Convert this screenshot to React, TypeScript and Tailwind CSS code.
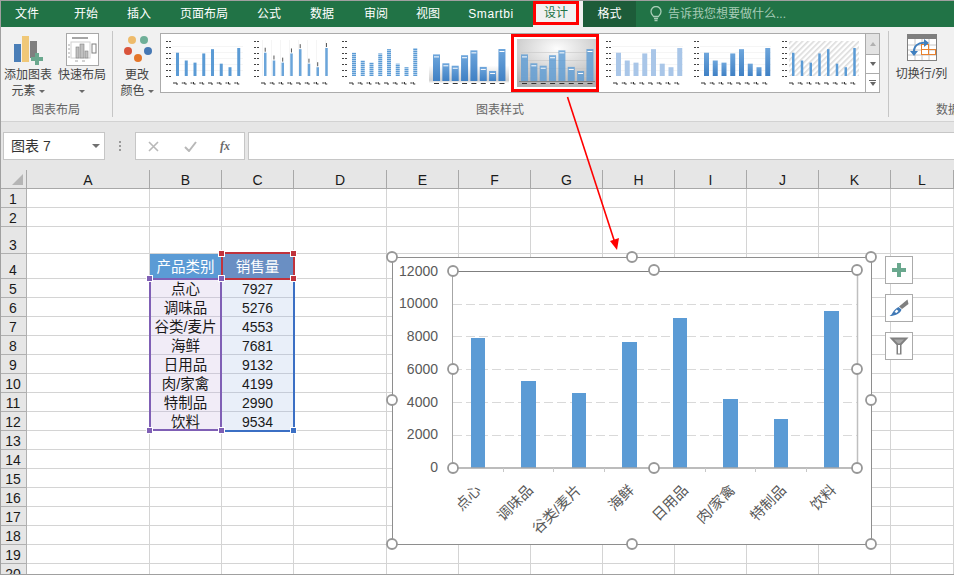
const font = "font-['Liberation_Sans','Noto_Sans_CJK_SC',sans-serif]";

const tabs = [
  { label: "文件", w: "w-[54px]" },
  { label: "开始", w: "w-[64px]" },
  { label: "插入", w: "w-[42px]" },
  { label: "页面布局", w: "w-[88px]" },
  { label: "公式", w: "w-[42px]" },
  { label: "数据", w: "w-[64px]" },
  { label: "审阅", w: "w-[44px]" },
  { label: "视图", w: "w-[60px]" },
  { label: "Smartbi", w: "w-[66px] tracking-[0.6px]" },
];

const sales = [7927, 5276, 4553, 7681, 9132, 4199, 2990, 9534];
const products = ["点心", "调味品", "谷类/麦片", "海鲜", "日用品", "肉/家禽", "特制品", "饮料"];
const columns = ["A", "B", "C", "D", "E", "F", "G", "H", "I", "J", "K", "L"];
const rowNumbers = Array.from({ length: 20 }, (_, i) => i + 1);

// ---- ribbon icons ----

function AddElementIcon() {
  return (
    <svg width="30" height="31" viewBox="0 0 30 31" className="block">
      <rect x="1" y="9" width="7" height="18" fill="#4a7eb7" />
      <rect x="9" y="1" width="7" height="26" fill="#f0c878" />
      <rect x="17" y="6" width="7" height="17" fill="#7f7f7f" />
      <rect x="18" y="22" width="12" height="4" fill="#6aa88e" />
      <rect x="22" y="18" width="4" height="12" fill="#6aa88e" />
    </svg>
  );
}

function QuickLayoutIcon() {
  return (
    <svg width="33" height="33" viewBox="0 0 33 33" className="block">
      <rect x="0.5" y="0.5" width="32" height="32" fill="#fff" stroke="#a8a8a8" />
      <rect x="6" y="4" width="16" height="2" fill="#a6a6a6" />
      <rect x="5" y="9" width="19" height="16" fill="none" stroke="#d0d0d0" />
      <rect x="10" y="14" width="3" height="11" fill="#c0c0c0" stroke="#808080" strokeWidth="0.6" />
      <rect x="14" y="11" width="4" height="14" fill="#c0c0c0" stroke="#808080" strokeWidth="0.6" />
      <rect x="19" y="18" width="3" height="7" fill="#c0c0c0" stroke="#808080" strokeWidth="0.6" />
      <rect x="26" y="11" width="4" height="9" fill="none" stroke="#808080" />
      <path d="M2 12h2M2 16h2M2 20h2M2 24h2M9 28h3M16 28h3" stroke="#a6a6a6" />
    </svg>
  );
}

function ColorsIcon() {
  return (
    <svg width="30" height="28" viewBox="0 0 30 28" className="block">
      <circle cx="10" cy="5" r="4" fill="#eebb6b" />
      <circle cx="22" cy="5" r="4" fill="#6faf98" />
      <circle cx="6" cy="16" r="4" fill="#d9543c" />
      <circle cx="26" cy="16" r="4" fill="#4678b4" />
      <circle cx="16" cy="23" r="4" fill="#e4762a" />
    </svg>
  );
}

function SwitchIcon() {
  return (
    <svg width="30" height="27" viewBox="0 0 30 27" className="block">
      <rect x="0.5" y="0.5" width="29" height="26" fill="#fff" stroke="#808080" />
      <rect x="0" y="0" width="30" height="5" fill="#7f7f7f" />
      <path d="M1 11h28M1 16h28M1 21h28M8 5v21M15 5v21M22 5v21" stroke="#c8c8c8" />
      <rect x="14.5" y="10.5" width="7" height="10" fill="#fff" stroke="#e9812e" />
      <rect x="14.5" y="15.5" width="14" height="5" fill="none" stroke="#e9812e" />
      <path d="M7 20C6 12 11 8 19 9" fill="none" stroke="#3f7fbf" strokeWidth="2" />
      <path d="M17 5l5 4-5 4zM3 17l8 0-4 5z" fill="#3f7fbf" />
    </svg>
  );
}

function Caret({ className = "" }: { className?: string }) {
  return <span className={`inline-block border-x-[3px] border-t-[3px] border-x-transparent border-t-[#6a6a6a] ${className}`} />;
}

// ---- gallery thumbnails ----

type Thumb = {
  wide?: boolean;
  barW?: number;
  fill: string;
  opacity?: number;
  back?: "fade" | "gray" | "hatch";
  stripes?: boolean;
  whisker?: boolean;
  marks?: boolean;
  grid?: boolean;
  vgrid?: boolean;
};

const thumbs: Thumb[] = [
  { barW: 3, fill: "#5b9bd5", grid: true },
  { barW: 2.5, fill: "#6ba5da", whisker: true, vgrid: true },
  { barW: 4, fill: "#5b9bd5", stripes: true },
  { wide: true, fill: "url(#barDeep)", back: "fade", marks: true },
  { wide: true, fill: "#5b9bd5", opacity: 0.8, back: "gray", marks: true },
  { barW: 5, fill: "#a9c6e8", grid: true },
  { barW: 5, fill: "url(#barDeep)", grid: true },
  { barW: 2.5, fill: "#5b9bd5", back: "hatch" },
];

function MiniChart({ t, id }: { t: Thumb; id: number }) {
  const bottom = t.wide ? 42 : 37;
  const scale = (t.wide ? 32 : 28) / 9534;
  return (
    <svg width="80" height="48" viewBox="0 0 80 48" className="block">
      <defs>
        <linearGradient id="barDeep" x1="0" y1="0" x2="0" y2="1">
          <stop offset="0" stopColor="#6ea6dc" />
          <stop offset="1" stopColor="#3f80c4" />
        </linearGradient>
        <linearGradient id={`fade${id}`} x1="0" y1="0" x2="0" y2="1">
          <stop offset="0" stopColor="#fff" />
          <stop offset="0.55" stopColor="#fff" />
          <stop offset="0.86" stopColor="#cfcfcf" />
          <stop offset="0.92" stopColor="#fff" />
        </linearGradient>
        <radialGradient id={`gray${id}`} cx="0.5" cy="0.2" r="0.85">
          <stop offset="0" stopColor="#fdfdfd" />
          <stop offset="1" stopColor="#b0b0b0" />
        </radialGradient>
        <pattern id={`hatch${id}`} width="4" height="4" patternUnits="userSpaceOnUse" patternTransform="rotate(45)">
          <rect width="4" height="4" fill="#fff" />
          <rect width="1.6" height="4" fill="#dcdcdc" />
        </pattern>
        <pattern id={`stripe${id}`} width="4" height="2" patternUnits="userSpaceOnUse">
          <rect width="4" height="2" fill="#c4dcf2" />
          <rect width="4" height="1.2" fill="#5b9bd5" />
        </pattern>
      </defs>
      {t.back === "fade" && <rect width="80" height="48" fill={`url(#fade${id})`} />}
      {t.back === "gray" && <rect width="80" height="48" fill={`url(#gray${id})`} />}
      {t.back === "hatch" && <rect x="8" y="2" width="70" height="35" fill={`url(#hatch${id})`} />}
      {t.grid && [7, 13, 19, 25, 31].map((y) => <rect key={y} x="7" y={y} width="71" height="0.6" fill="#efefef" />)}
      {t.vgrid && [9, 18, 27, 36, 45, 54, 63, 72].map((x) => <rect key={x} x={x} y="1" width="0.6" height="36" fill="#efefef" />)}
      {t.back === "gray" && [13, 21, 29, 37].map((y) => <rect key={y} x="4" y={y} width="72" height="0.6" fill="#c6c6c6" />)}
      {!t.wide && [2, 8, 14, 19, 25, 31, 37].map((y) => (
        <path key={y} d={`M1 ${y + 0.5}h2M4 ${y + 0.5}h2`} stroke="#444" />
      ))}
      {sales.map((v, i) => {
        const h = v * scale;
        const x = t.wide ? 4 + i * 9.35 : 11 + i * 8.75;
        const w = t.wide ? 7 : t.barW ?? 3;
        return (
          <g key={i}>
            <rect
              x={x}
              y={bottom - h}
              width={w}
              height={h}
              fill={t.stripes ? `url(#stripe${id})` : t.fill}
              opacity={t.opacity ?? 1}
            />
            {t.whisker && <rect x={x + 0.7} y={bottom - h - 5} width="1" height="4" fill="#555" />}
            {t.marks && <rect x={x + 1} y={bottom - h + 2} width="5" height="1" fill="#fff" />}
            {t.wide ? (
              <rect x={x + 1} y="44" width="5" height="1" fill="#333" />
            ) : (
              <path d={`M${x - 3} 44h2M${x} 43v2h2`} stroke="#333" fill="none" />
            )}
          </g>
        );
      })}
      {t.back === "gray" && <rect x="2" y="42" width="76" height="1" fill="#808080" />}
    </svg>
  );
}

// ---- embedded chart ----

function Handle({ x, y }: { x: number; y: number }) {
  return <circle cx={x} cy={y} r="5" fill="#fff" stroke="#979797" strokeWidth="1.8" />;
}

const barBoxes = [
  [471, 14], [521, 15], [572, 14], [622, 15], [673, 14], [723, 15], [774, 14], [824, 15],
];
const labelEnds = [482, 534, 582, 635, 689, 736, 787, 837];
const axisLabels = [
  ["12000", 271], ["10000", 303], ["8000", 336], ["6000", 369], ["4000", 402], ["2000", 434], ["0", 467],
] as const;

function Chart() {
  return (
    <svg width="954" height="575" viewBox="0 0 954 575" className={`absolute left-0 top-0 ${font}`}>
      <rect x="392.5" y="257.5" width="479" height="287" fill="#fff" stroke="#8e8e8e" />
      {[304, 336, 369, 402, 435].map((y) => (
        <line key={y} x1="453" x2="857" y1={y + 0.5} y2={y + 0.5} stroke="#d9d9d9" strokeDasharray="9 4" />
      ))}
      {sales.map((v, i) => {
        const top = 468 - Math.round((v / 12000) * 197);
        return <rect key={i} x={barBoxes[i][0]} y={top} width={barBoxes[i][1]} height={468 - top} fill="#5b9bd5" />;
      })}
      <line x1="453" x2="857" y1="271.5" y2="271.5" stroke="#7f7f7f" />
      <line x1="857.5" x2="857.5" y1="271" y2="468" stroke="#bfbfbf" strokeWidth="1.5" />
      <line x1="452.5" x2="452.5" y1="271" y2="468" stroke="#a6a6a6" />
      <line x1="453" x2="857" y1="468" y2="468" stroke="#a6a6a6" strokeWidth="1.5" />
      {[503, 553, 604, 705, 755, 806].map((x) => (
        <line key={x} x1={x + 0.5} x2={x + 0.5} y1="468" y2="472" stroke="#c8c8c8" />
      ))}
      {axisLabels.map(([t, y]) => (
        <text key={t} x="438" y={y + 5} textAnchor="end" fontSize="14" fill="#595959">{t}</text>
      ))}
      {products.map((p, i) => (
        <text
          key={p}
          x={labelEnds[i]}
          y={491}
          textAnchor="end"
          fontSize="14.5"
          fill="#595959"
          transform={`rotate(-45 ${labelEnds[i]} 491)`}
        >
          {p}
        </text>
      ))}
      {[[392, 257], [632, 257], [871, 257], [392, 400], [871, 400], [392, 544], [632, 544], [871, 544],
        [453, 271], [654, 270], [857, 270], [453, 369], [857, 369], [453, 468], [654, 468], [857, 468]].map(([x, y]) => (
        <Handle key={`${x}-${y}`} x={x} y={y} />
      ))}
    </svg>
  );
}

function ChartButtons() {
  return (
    <div className="absolute left-[885px] top-[256px] flex flex-col gap-[10px]">
      <div className="w-[28px] h-[28px] bg-white border border-[#ababab] flex items-center justify-center">
        <svg width="14" height="14" viewBox="0 0 14 14"><path d="M5 0h4v5h5v4H9v5H5V9H0V5h5z" fill="#6aa88e" /></svg>
      </div>
      <div className="w-[28px] h-[28px] bg-white border border-[#ababab] flex items-center justify-center">
        <svg width="20" height="18" viewBox="0 0 20 18">
          <path d="M18.5 0.5 19.5 5 13 10 10 7.5z" fill="#7f7f7f" />
          <path d="M9.5 8 12.5 10.5C11.5 14.5 6 17 0.5 17 4 15.5 3.5 11 9.5 8z" fill="#3f78b5" />
          <path d="M7.5 10.5 9.5 12 7.5 14 5.5 13z" fill="#fff" />
        </svg>
      </div>
      <div className="w-[28px] h-[28px] bg-white border border-[#ababab] flex items-center justify-center">
        <svg width="20" height="18" viewBox="0 0 20 18">
          <path d="M0.5 0.5h19L12.5 8v9.5h-5V8z" fill="#808080" />
          <path d="M5 2.5h10L11 6.5H9z" fill="#a8a8a8" />
          <rect x="9" y="8" width="2" height="8.5" fill="#fff" />
        </svg>
      </div>
    </div>
  );
}

// ---- table selection handles ----

function Square({ x, y, c }: { x: number; y: number; c: string }) {
  return <div className={`absolute w-[7px] h-[7px] border border-white ${c}`} style={{ left: x - 3, top: y - 3 }} />;
}

function TableSelection() {
  return (
    <>
      <div className="absolute left-[149px] top-[278px] w-[73px] h-[153px] border-2 border-[#7f5fb5]" />
      <div className="absolute left-[222px] top-[278px] w-[73px] h-[154px] border-2 border-l-0 border-[#3b6fc4]" />
      <div className="absolute left-[221px] top-[252px] w-[74px] h-[28px] border-2 border-[#c0333c]" />
      <Square x={149} y={278} c="bg-[#7f5fb5]" />
      <Square x={221} y={278} c="bg-[#7f5fb5]" />
      <Square x={149} y={430} c="bg-[#7f5fb5]" />
      <Square x={221} y={430} c="bg-[#7f5fb5]" />
      <Square x={293} y={430} c="bg-[#3b6fc4]" />
      <Square x={221} y={253} c="bg-[#c0333c]" />
      <Square x={293} y={253} c="bg-[#c0333c]" />
      <Square x={293} y={278} c="bg-[#c0333c]" />
    </>
  );
}

// ---- sheet ----

function Sheet() {
  return (
    <div className="grid grid-cols-[27px_123px_72px_72px_93px_72px_72px_72px_72px_72px_72px_72px_63px] grid-rows-[19px_19px_19px_27px_25px_repeat(16,19px)] text-[14px] text-[#1a1a1a]">
      <div className="relative bg-[#e6e6e6] border-r border-b border-[#a8a8a8]">
        <svg width="12" height="12" viewBox="0 0 12 12" className="absolute left-[12px] top-[4px]"><path d="M11 0v11H0z" fill="#b5b5b5" /></svg>
      </div>
      {columns.map((c) => (
        <div key={c} className="bg-[#e6e6e6] border-r border-b border-[#a8a8a8] flex items-center justify-center leading-none pt-[2px]">
          {c}
        </div>
      ))}
      {rowNumbers.flatMap((r) => {
        const cells = [
          <div key={`n${r}`} className="bg-[#e6e6e6] border-r border-b border-[#b0b0b0] flex items-end justify-center leading-[16px]">
            {r}
          </div>,
        ];
        columns.forEach((c) => {
          let cls = "bg-white border-[#d4d4d4]";
          let text = "";
          if (r === 4 && c === "B") {
            cls = "bg-[#5b9bd5] border-[#5b9bd5] text-white text-[14.5px]";
            text = "产品类别";
          } else if (r === 4 && c === "C") {
            cls = "bg-[#6a8fc3] border-[#6a8fc3] text-white text-[14.5px]";
            text = "销售量";
          } else if (r >= 5 && r <= 12 && c === "B") {
            cls = "bg-[#f1ecf7] border-[#cfcbd8] text-[14.5px]";
            text = products[r - 5];
          } else if (r >= 5 && r <= 12 && c === "C") {
            cls = "bg-[#e9eff9] border-[#c6ccd8]";
            text = String(sales[r - 5]);
          }
          cells.push(
            <div key={`${c}${r}`} className={`border-r border-b flex items-center justify-center leading-none whitespace-nowrap pt-[2px] ${cls}`}>
              {text}
            </div>,
          );
        });
        return cells;
      })}
    </div>
  );
}

export default function App() {
  return (
    <div className={`relative w-[954px] h-[575px] overflow-hidden bg-white ${font}`}>
      {/* tabs */}
      <div className="h-[27px] bg-[#217346] flex items-start text-[12px] text-white">
        {tabs.map((t) => (
          <div key={t.label} className={`${t.w} h-[27px] flex items-center justify-center shrink-0`}>
            {t.label}
          </div>
        ))}
        <div className="w-[9px] shrink-0" />
        <div className="w-[46px] h-[27px] shrink-0 bg-[#f1f1f1] text-[#217346] flex items-start justify-center">
          <div className="w-[46px] h-[24px] mt-[1px] border-[3px] border-[#ff0000] flex items-center justify-center">设计</div>
        </div>
        <div className="w-[4px] shrink-0 h-[27px] bg-[#f1f1f1]" />
        <div className="w-[53px] h-[27px] shrink-0 bg-[#1d5c39] flex items-center justify-center">格式</div>
        <div className="ml-[14px] h-[27px] flex items-center gap-[6px] text-[#a7ccb6]">
          <svg width="12" height="16" viewBox="0 0 12 16" fill="none" stroke="#a7ccb6" strokeWidth="1.3">
            <path d="M3.5 10.5C2.5 9 1 8 1 5.5a5 5 0 0 1 10 0C11 8 9.5 9 8.5 10.5z" />
            <path d="M4 12.5h4M4.5 14.5h3" />
          </svg>
          <span>告诉我您想要做什么...</span>
        </div>
      </div>

      {/* ribbon */}
      <div className="h-[95px] bg-[#f1f1f1] border-b border-[#d2d2d2] flex text-[12px] leading-[15px] text-[#444]">
        <div className="w-[113px] shrink-0 flex flex-col border-r border-[#c6c6c6] my-[4px]">
          <div className="flex-1 flex pl-[3px]">
            <div className="w-[50px] flex flex-col items-center">
              <div className="h-[37px] pt-[4px]"><AddElementIcon /></div>
              <div className="whitespace-nowrap">添加图表</div>
              <div className="whitespace-nowrap flex items-center gap-[3px] mt-[1px]">元素 <Caret /></div>
            </div>
            <div className="w-[52px] ml-[3px] flex flex-col items-center">
              <div className="h-[37px] pt-[2px]"><QuickLayoutIcon /></div>
              <div className="whitespace-nowrap">快速布局</div>
              <div className="h-[15px] mt-[1px] flex items-center"><Caret /></div>
            </div>
          </div>
          <div className="text-center text-[#666] -mb-[1px]">图表布局</div>
        </div>

        <div className="w-[776px] shrink-0 flex flex-col border-r border-[#c6c6c6] my-[4px]">
          <div className="flex-1 flex">
            <div className="w-[46px] flex flex-col items-center pl-[2px]">
              <div className="h-[37px] pt-[4px]"><ColorsIcon /></div>
              <div>更改</div>
              <div className="flex items-center gap-[3px] mt-[1px]">颜色 <Caret /></div>
            </div>
            <div className="ml-[1px] mt-[2px] h-[60px] flex border border-[#ababab] bg-white">
              {thumbs.map((t, i) => (
                <div key={i} className="relative w-[88px] pl-[4px] pt-[5px]">
                  <MiniChart t={t} id={i} />
                  {i === 4 && <div className="absolute -left-[2px] top-0 w-[88px] h-[58px] border-[3px] border-[#ff0000]" />}
                </div>
              ))}
              <div className="w-[14px] border-l border-[#ababab] flex flex-col">
                <div className="h-[21px] bg-[#e3e3e3] border-b border-[#ababab] flex items-center justify-center">
                  <span className="border-x-[3px] border-b-[4px] border-x-transparent border-b-[#b0b0b0]" />
                </div>
                <div className="h-[19px] border-b border-[#ababab] flex items-center justify-center">
                  <span className="border-x-[3px] border-t-[4px] border-x-transparent border-t-[#666]" />
                </div>
                <div className="flex-1 flex flex-col items-center justify-center gap-[1px]">
                  <span className="w-[7px] h-px bg-[#666]" />
                  <span className="border-x-[3px] border-t-[4px] border-x-transparent border-t-[#666]" />
                </div>
              </div>
            </div>
          </div>
          <div className="text-center text-[#666] -mb-[1px] w-[774px]">图表样式</div>
        </div>

        <div className="flex-1 flex flex-col my-[4px] min-w-0">
          <div className="flex-1 flex flex-col items-center pt-[3px]">
            <SwitchIcon />
            <div className="mt-[6px] whitespace-nowrap">切换行/列</div>
          </div>
          <div className="pl-[47px] whitespace-nowrap text-[#666] -mb-[1px]">数据</div>
        </div>
      </div>

      {/* formula bar */}
      <div className="h-[48px] bg-[#e6e6e6] flex items-start pt-[10px] pl-[3px]">
        <div className="w-[102px] h-[28px] bg-white border border-[#c6c6c6] flex items-center justify-between pl-[7px] pr-[4px] text-[14px] text-[#333]">
          <span>图表 7</span>
          <span className="border-x-[4px] border-t-[4px] border-x-transparent border-t-[#707070]" />
        </div>
        <div className="w-[30px] h-[28px] flex flex-col items-center justify-center gap-[2px]">
          <span className="w-[2px] h-[2px] bg-[#9a9a9a]" />
          <span className="w-[2px] h-[2px] bg-[#9a9a9a]" />
          <span className="w-[2px] h-[2px] bg-[#9a9a9a]" />
        </div>
        <div className="w-[110px] h-[28px] bg-white border border-[#c6c6c6] flex items-center pl-[12px] gap-[25px]">
          <svg width="11" height="11" viewBox="0 0 11 11"><path d="M1 1l9 9M10 1l-9 9" stroke="#b8b8b8" strokeWidth="1.6" /></svg>
          <svg width="13" height="11" viewBox="0 0 13 11"><path d="M1 6l4 4 7-9" fill="none" stroke="#b8b8b8" strokeWidth="2" /></svg>
          <span className="font-['Liberation_Serif',serif] italic font-bold text-[12px] text-[#6a6a6a] -ml-[2px]">fx</span>
        </div>
        <div className="ml-[3px] flex-1 h-[28px] bg-white border-y border-l border-[#c6c6c6]" />
      </div>

      <Sheet />
      <TableSelection />
      <Chart />
      <ChartButtons />

      {/* annotation arrow */}
      <svg width="954" height="575" viewBox="0 0 954 575" className="absolute left-0 top-0 pointer-events-none">
        <line x1="567.5" y1="97" x2="615" y2="243" stroke="#ff0000" strokeWidth="1.6" />
        <path d="M617 250 610 241 619 238z" fill="#ff0000" />
      </svg>

      <div className="absolute inset-0 border-y border-l border-[#a0a0a0] pointer-events-none" />
    </div>
  );
}
